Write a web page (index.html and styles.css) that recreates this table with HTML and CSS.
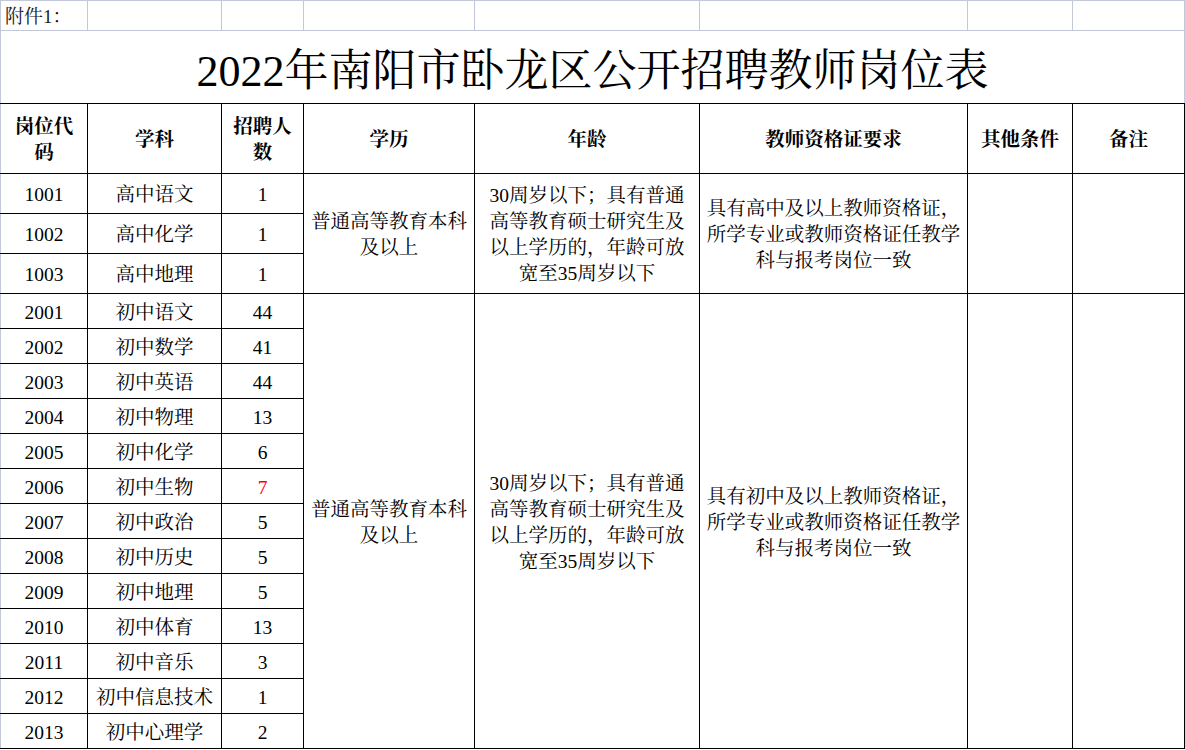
FILE: index.html
```html
<!DOCTYPE html>
<html lang="zh-CN">
<head>
<meta charset="utf-8">
<title>2022年南阳市卧龙区公开招聘教师岗位表</title>
<link rel="stylesheet" href="styles.css">
</head>
<body>
<table class="sheet">
  <colgroup>
    <col class="c1"><col class="c2"><col class="c3"><col class="c4">
    <col class="c5"><col class="c6"><col class="c7"><col class="c8">
  </colgroup>
  <tbody>
    <tr class="r-top">
      <td class="g note">附件1：</td><td class="g"></td><td class="g"></td><td class="g"></td>
      <td class="g"></td><td class="g"></td><td class="g"></td><td class="g"></td>
    </tr>
    <tr class="r-title">
      <td class="title" colspan="8"><div class="title-box">2022年南阳市卧龙区公开招聘教师岗位表</div></td>
    </tr>
    <tr class="r-head">
      <th class="first">岗位代<br>码</th>
      <th>学科</th>
      <th>招聘人<br>数</th>
      <th>学历</th>
      <th>年龄</th>
      <th>教师资格证要求</th>
      <th>其他条件</th>
      <th>备注</th>
    </tr>
    <tr class="r-hi">
      <td class="first">1001</td><td>高中语文</td><td>1</td>
      <td rowspan="3" class="txt">普通高等教育本科<br>及以上</td>
      <td rowspan="3" class="txt age">30周岁以下；具有普通<br>高等教育硕士研究生及<br>以上学历的，年龄可放<br>宽至35周岁以下</td>
      <td rowspan="3" class="txt">具有高中及以上教师资格证，<br>所学专业或教师资格证任教学<br>科与报考岗位一致</td>
      <td rowspan="3"></td><td rowspan="3"></td>
    </tr>
    <tr class="r-hi"><td class="first">1002</td><td>高中化学</td><td>1</td></tr>
    <tr class="r-hi"><td class="first">1003</td><td>高中地理</td><td>1</td></tr>
    <tr class="r-mid">
      <td class="first">2001</td><td>初中语文</td><td>44</td>
      <td rowspan="13" class="txt">普通高等教育本科<br>及以上</td>
      <td rowspan="13" class="txt age">30周岁以下；具有普通<br>高等教育硕士研究生及<br>以上学历的，年龄可放<br>宽至35周岁以下</td>
      <td rowspan="13" class="txt">具有初中及以上教师资格证，<br>所学专业或教师资格证任教学<br>科与报考岗位一致</td>
      <td rowspan="13"></td><td rowspan="13"></td>
    </tr>
    <tr class="r-mid"><td class="first">2002</td><td>初中数学</td><td>41</td></tr>
    <tr class="r-mid"><td class="first">2003</td><td>初中英语</td><td>44</td></tr>
    <tr class="r-mid"><td class="first">2004</td><td>初中物理</td><td>13</td></tr>
    <tr class="r-mid"><td class="first">2005</td><td>初中化学</td><td>6</td></tr>
    <tr class="r-mid"><td class="first">2006</td><td>初中生物</td><td class="red">7</td></tr>
    <tr class="r-mid"><td class="first">2007</td><td>初中政治</td><td>5</td></tr>
    <tr class="r-mid"><td class="first">2008</td><td>初中历史</td><td>5</td></tr>
    <tr class="r-mid"><td class="first">2009</td><td>初中地理</td><td>5</td></tr>
    <tr class="r-mid"><td class="first">2010</td><td>初中体育</td><td>13</td></tr>
    <tr class="r-mid"><td class="first">2011</td><td>初中音乐</td><td>3</td></tr>
    <tr class="r-mid"><td class="first">2012</td><td>初中信息技术</td><td>1</td></tr>
    <tr class="r-mid"><td class="first">2013</td><td>初中心理学</td><td>2</td></tr>
  </tbody>
</table>
</body>
</html>
```
FILE: styles.css
```css
html, body {
  margin: 0;
  padding: 0;
  background: #ffffff;
}

body {
  font-family: "Liberation Serif", "Noto Serif CJK SC", "Noto Sans CJK SC", serif;
  color: #000000;
}

.sheet {
  border-collapse: collapse;
  table-layout: fixed;
  width: 1184px;
}

.c1 { width: 87px; }
.c2 { width: 134px; }
.c3 { width: 82px; }
.c4 { width: 171px; }
.c5 { width: 225px; }
.c6 { width: 268px; }
.c7 { width: 105px; }
.c8 { width: 112px; }

.sheet td,
.sheet th {
  border: 1px solid #000000;
  padding: 3px 3px 0 3px;
  text-align: center;
  vertical-align: middle;
  font-size: 19.5px;
  line-height: 26px;
  overflow: hidden;
  white-space: nowrap;
}

.sheet .first {
  border-left: 1px solid #c3c8d8;
}

/* top light grid row */
.r-top td {
  height: 26px;
  border: 1px solid #c3c8d8;
}
.r-top td.note {
  text-align: left;
  padding-left: 4px;
  font-size: 19px;
  color: #1a1a1a;
}

/* title row */
.r-title td.title {
  height: 72px;
  padding: 0;
  border-left: 1px solid #c3c8d8;
  border-right: 1px solid #c3c8d8;
  border-top: 1px solid #c3c8d8;
  border-bottom: 1px solid #000000;
}

.title-box {
  height: 72px;
  display: flex;
  align-items: center;
  justify-content: center;
  padding-top: 9px;
  box-sizing: border-box;
  font-size: 44px;
  line-height: 44px;
  overflow: hidden;
}

/* header */
.r-head th {
  height: 66px;
  font-weight: bold;
  font-size: 19.5px;
  line-height: 26px;
}

.r-hi td { height: 36px; }
.r-mid td { height: 31px; }

.sheet td.red {
  color: #ff0000;
}
```
